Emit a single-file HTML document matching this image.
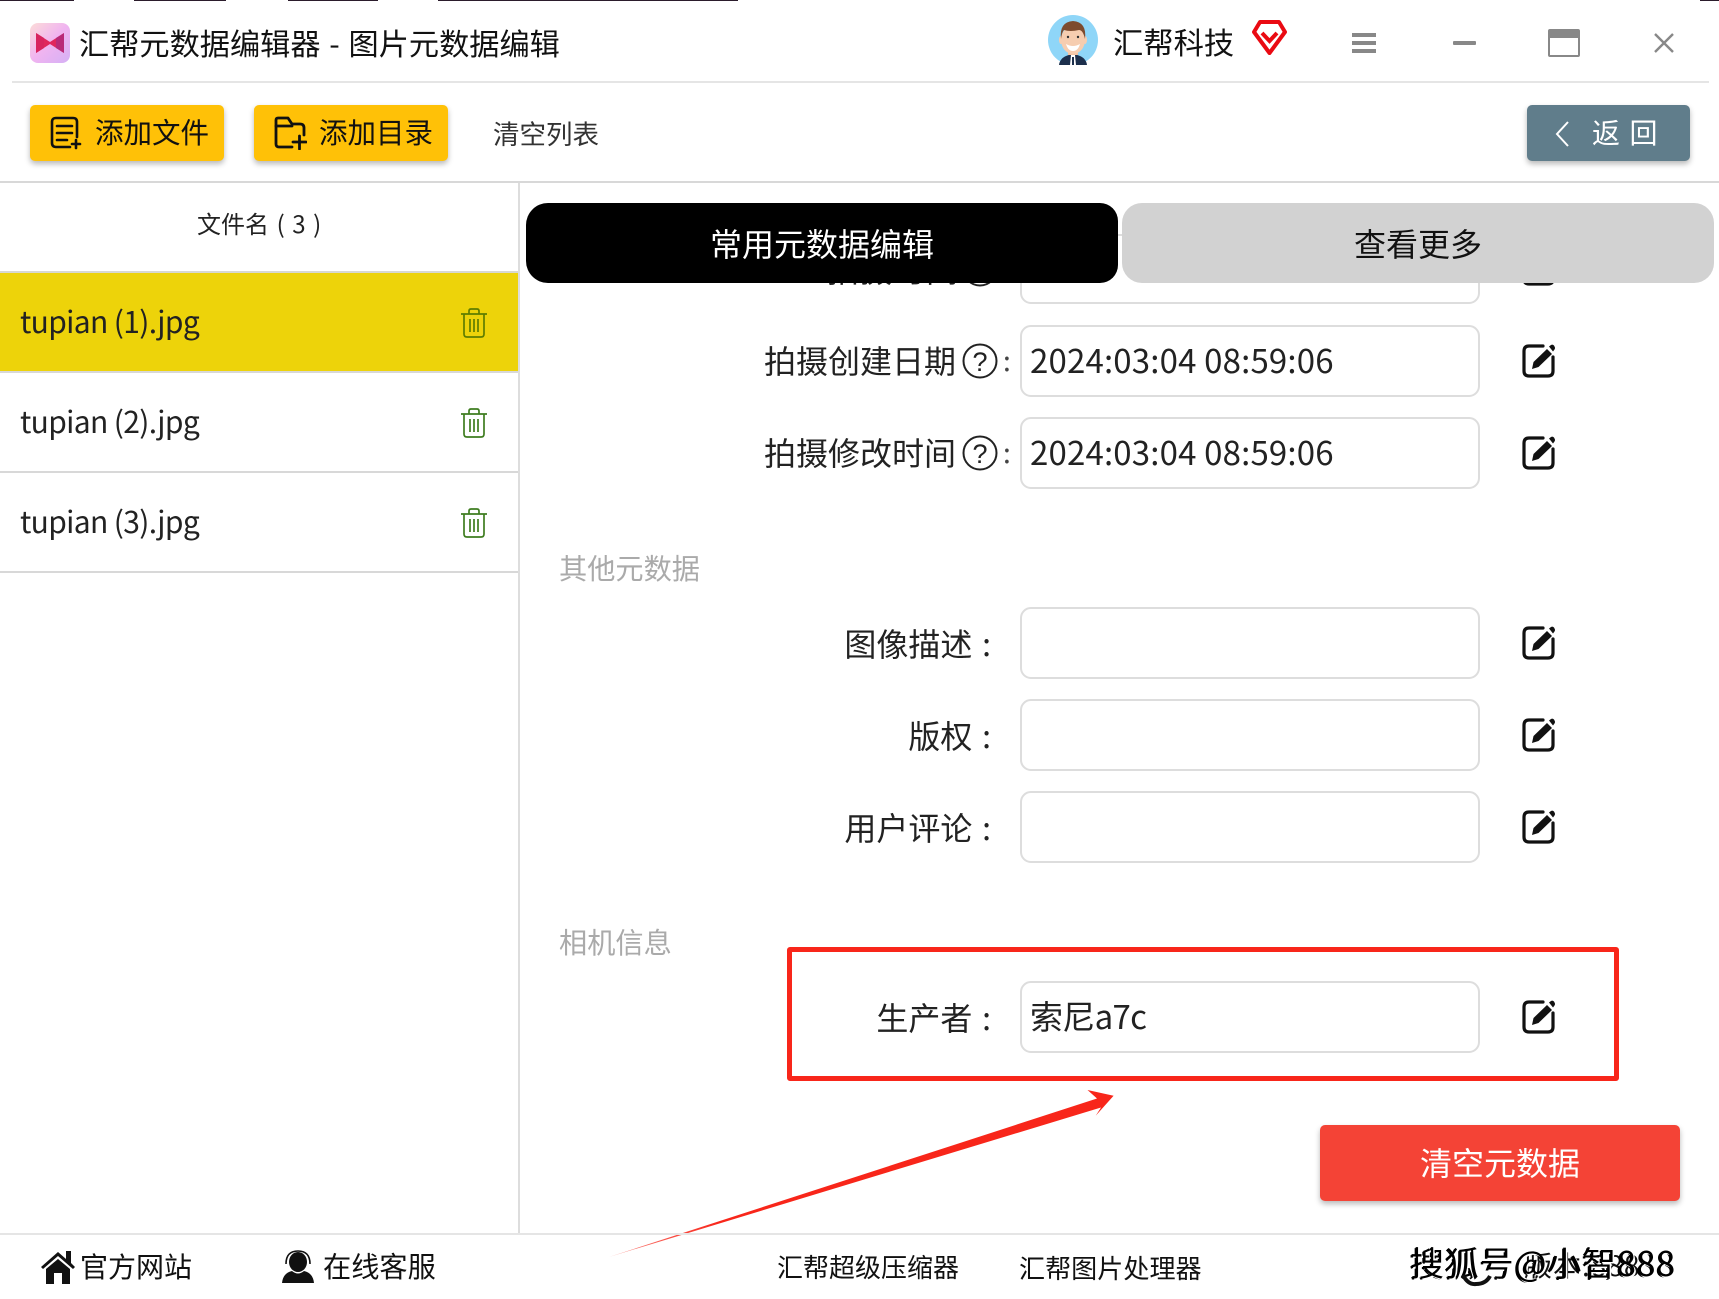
<!DOCTYPE html>
<html lang="zh-CN"><head><meta charset="utf-8"><title>汇帮元数据编辑器</title>
<style>
html,body{margin:0;padding:0;background:#fff}
#p{position:relative;width:1719px;height:1299px;overflow:hidden;background:#fff;font-family:"Liberation Sans","Noto Sans CJK SC",sans-serif;color:#111}
#p *{box-sizing:border-box}
.a{position:absolute}
.t{position:absolute;white-space:nowrap;line-height:1}
.n{font-family:"Noto Sans CJK SC",sans-serif}
.btn{position:absolute;border-radius:5px;box-shadow:0 3px 6px rgba(0,0,0,.28)}
.inp{position:absolute;left:1020px;width:460px;border:2px solid #ddd;border-radius:11px;background:#fff}
.lab{position:absolute;right:728px;font-size:32px;line-height:1;white-space:nowrap;color:#222;font-family:"Noto Sans CJK SC",sans-serif;font-weight:400;word-spacing:2.500px}
.val{position:absolute;left:1030px;font-size:33px;line-height:1;white-space:nowrap;color:#222;font-family:"Noto Sans CJK SC",sans-serif;font-weight:400;letter-spacing:.17px}
.row{position:absolute;left:0;width:518px;height:100px;border-bottom:2px solid #d8d8d8}
.row span{position:absolute;left:20px;top:29px;font-size:30px;line-height:1.2;color:#222;font-family:"Noto Sans CJK SC",sans-serif;font-weight:400;letter-spacing:-.65px}
</style></head><body><div id="p">

<svg class="a" style="left:0;top:0" width="1719" height="2"><g fill="#2b1c2c"><rect width="74" height="1"/><rect x="134" width="92" height="1"/><rect x="288" width="90" height="1"/><rect x="438" width="300" height="1"/><rect x="1700" width="19" height="1"/></g></svg>

<!-- header -->
<svg class="a" style="left:30px;top:23px" width="40" height="40" viewBox="0 0 40 40"><defs><linearGradient id="lg" x1="0" y1="0" x2="1" y2="1"><stop offset="0" stop-color="#fcdcd8"/><stop offset=".5" stop-color="#f0b4f0"/><stop offset="1" stop-color="#d5b0f5"/></linearGradient></defs><rect width="40" height="40" rx="8" fill="url(#lg)"/><path d="M6 10 L20 19 L34 10 V30 L20 21 L6 30Z" fill="#e0265c"/><path d="M6 10 L14 15 V25 L6 30Z" fill="#d8245e"/><path d="M34 10 L26 15 V25 L34 30Z" fill="#b82a78"/></svg>
<div class="t n" style="left:79px;top:25px;font-size:30.200px;font-weight:400;line-height:34px;color:#111;word-spacing:2px">汇帮元数据编辑器 - 图片元数据编辑</div>
<svg class="a" style="left:1048px;top:15px" width="50" height="50" viewBox="0 0 50 50"><circle cx="25" cy="25" r="25" fill="#8fd6f8"/><path d="M11 50 Q12 41 25 39 Q38 41 39 50Z" fill="#1c2f4c"/><path d="M23 40h4l1 10h-6z" fill="#fff"/><rect x="24" y="42" width="2" height="8" fill="#1c2f4c"/><rect x="20" y="30" width="10" height="10" fill="#f3c3a3"/><ellipse cx="25" cy="25" rx="12" ry="14" fill="#f6cdb0"/><ellipse cx="13" cy="25" rx="2" ry="4" fill="#f6cdb0"/><ellipse cx="37" cy="25" rx="2" ry="4" fill="#f6cdb0"/><path d="M13 24 Q11 7 25 6 Q39 7 37 24 Q35 15 31 15 Q22 17 16 15 Q14 17 13 24Z" fill="#7d4b2e"/><path d="M18 29 Q25 33 32 29 Q30 36 25 36 Q20 36 18 29Z" fill="#fff"/><circle cx="20" cy="22" r="1.2" fill="#333"/><circle cx="30" cy="22" r="1.2" fill="#333"/></svg>
<div class="t n" style="left:1113px;top:24px;font-size:30.300px;font-weight:400;line-height:34px;color:#111">汇帮科技</div>
<svg class="a" style="left:1252px;top:20px" width="35" height="35" viewBox="0 0 35 35"><path d="M8 2H27L33 12 17.5 33 2 12Z" fill="none" stroke="#ea0a12" stroke-width="4" stroke-linejoin="round"/><path d="M10 13 L17.5 21 L25 13" fill="none" stroke="#ea0a12" stroke-width="4"/></svg>
<div class="a" style="left:1352px;top:33px;width:24px;height:4px;background:#888"></div>
<div class="a" style="left:1352px;top:41px;width:24px;height:4px;background:#888"></div>
<div class="a" style="left:1352px;top:49px;width:24px;height:4px;background:#888"></div>
<div class="a" style="left:1453px;top:41px;width:23px;height:4px;background:#888;border-radius:1px"></div>
<div class="a" style="left:1548px;top:29px;width:32px;height:28px;border:2px solid #888;border-top:9px solid #888;border-radius:2px"></div>
<svg class="a" style="left:1654px;top:33px" width="20" height="20"><path d="M1 1L19 19M19 1L1 19" stroke="#888" stroke-width="2.4"/></svg>
<div class="a" style="left:12px;top:81px;width:1697px;height:2px;background:#e5e5e5"></div>

<!-- toolbar -->
<div class="btn" style="left:30px;top:105px;width:194px;height:56px;background:#ffc107"></div>
<svg class="a" style="left:49px;top:116px" width="34" height="34" viewBox="0 0 34 34" fill="none" stroke="#111" stroke-width="2.6" stroke-linecap="round"><path d="M21 31H7Q3 31 3 27V6Q3 2 7 2H24Q28 2 28 6V21"/><path d="M8 10H23M8 17H23M8 24H18"/><path d="M23 28H31M27 24V32"/></svg>
<div class="t n" style="left:95px;top:115px;font-size:28.500px;line-height:34px;font-weight:400;color:#111">添加文件</div>
<div class="btn" style="left:254px;top:105px;width:194px;height:56px;background:#ffc107"></div>
<svg class="a" style="left:273px;top:116px" width="34" height="34" viewBox="0 0 34 34" fill="none" stroke="#111" stroke-width="2.8" stroke-linecap="round" stroke-linejoin="round"><path d="M19 31H6Q3 31 3 28V4Q3 2 5 2H15L19 8H27Q31 8 31 12V19"/><path d="M3 10H19"/><path d="M20 26H33M26.500 20V33"/></svg>
<div class="t n" style="left:319px;top:115px;font-size:28.500px;line-height:34px;font-weight:400;color:#111">添加目录</div>
<div class="t n" style="left:493px;top:117px;font-size:26.500px;line-height:32px;font-weight:400;color:#333">清空列表</div>
<div class="btn" style="left:1527px;top:105px;width:163px;height:56px;background:#607d8b"></div>
<svg class="a" style="left:1552px;top:120px" width="20" height="28"><path d="M16 2L5 14L16 26" fill="none" stroke="#fff" stroke-width="2"/></svg>
<div class="t n" style="left:1592px;top:115px;font-size:28px;line-height:34px;font-weight:400;color:#fff;letter-spacing:9.500px">返回</div>
<div class="a" style="left:0;top:181px;width:1719px;height:2px;background:#d8d8d8"></div>

<!-- left list -->
<div class="a" style="left:518px;top:183px;width:2px;height:1051px;background:#ddd"></div>
<div class="t n" style="left:197px;top:206px;font-size:24px;line-height:34px;font-weight:400;color:#222;white-space:pre;word-spacing:2.200px">文件名 ( 3 )</div>
<div class="a" style="left:0;top:271px;width:518px;height:2px;background:#d8d8d0"></div>
<div class="row" style="top:273px;background:#edd30a"><span>tupian (1).jpg</span></div>
<div class="row" style="top:373px"><span>tupian (2).jpg</span></div>
<div class="row" style="top:473px"><span>tupian (3).jpg</span></div>
<svg class="a" style="left:460px;top:307px" width="28" height="32" viewBox="0 0 28 32" fill="none" stroke="#5f7d00" stroke-width="1.7"><path d="M1 7H27M9 7V4Q9 2 11 2H17Q19 2 19 4V7M4 7V27Q4 30 7 30H21Q24 30 24 27V7M10 12V25M14 12V25M18 12V25"/></svg>
<svg class="a" style="left:460px;top:407px" width="28" height="32" viewBox="0 0 28 32" fill="none" stroke="#3f7d20" stroke-width="1.7"><path d="M1 7H27M9 7V4Q9 2 11 2H17Q19 2 19 4V7M4 7V27Q4 30 7 30H21Q24 30 24 27V7M10 12V25M14 12V25M18 12V25"/></svg>
<svg class="a" style="left:460px;top:507px" width="28" height="32" viewBox="0 0 28 32" fill="none" stroke="#3f7d20" stroke-width="1.7"><path d="M1 7H27M9 7V4Q9 2 11 2H17Q19 2 19 4V7M4 7V27Q4 30 7 30H21Q24 30 24 27V7M10 12V25M14 12V25M18 12V25"/></svg>

<!-- clipped row under tabs -->
<div class="inp" style="top:234px;height:70px"></div>
<svg class="a" style="left:1522px;top:252px" width="34" height="34"><use href="#ed"/></svg>
<div class="t n" style="left:827px;top:250px;font-size:32px;line-height:38px;font-weight:400;color:#222;letter-spacing:1px">拍摄时间</div>
<svg class="a" style="left:962px;top:251px" width="36" height="36"><circle cx="18" cy="18" r="16.500" fill="none" stroke="#222" stroke-width="2"/></svg>

<!-- tabs -->
<div class="a" style="left:526px;top:203px;width:592px;height:80px;background:#000;border-radius:22px 18px 18px 22px"></div>
<div class="t n" style="left:526px;width:592px;text-align:center;top:223px;font-size:32px;line-height:40px;font-weight:400;color:#fff">常用元数据编辑</div>
<div class="a" style="left:1122px;top:203px;width:592px;height:80px;background:#d2d2d2;border-radius:20px"></div>
<div class="t n" style="left:1122px;width:592px;text-align:center;top:223px;font-size:32px;line-height:40px;font-weight:400;color:#111">查看更多</div>

<!-- rows -->
<div class="lab" style="right:763px;top:341px;line-height:38px">拍摄创建日期</div>
<svg class="a" style="left:962px;top:343px" width="36" height="36"><circle cx="18" cy="18" r="16.500" fill="none" stroke="#222" stroke-width="2"/><text x="18" y="28" text-anchor="middle" font-size="27" font-family="Liberation Sans" fill="#222">?</text></svg>
<div class="t n" style="left:1003px;top:344px;font-size:28px;line-height:32px;color:#444">:</div>
<div class="inp" style="top:325px;height:72px"></div>
<div class="val" style="top:340px;line-height:38px">2024:03:04 08:59:06</div>

<div class="lab" style="right:763px;top:433px;line-height:38px">拍摄修改时间</div>
<svg class="a" style="left:962px;top:435px" width="36" height="36"><circle cx="18" cy="18" r="16.500" fill="none" stroke="#222" stroke-width="2"/><text x="18" y="28" text-anchor="middle" font-size="27" font-family="Liberation Sans" fill="#222">?</text></svg>
<div class="t n" style="left:1003px;top:436px;font-size:28px;line-height:32px;color:#444">:</div>
<div class="inp" style="top:417px;height:72px"></div>
<div class="val" style="top:432px;line-height:38px">2024:03:04 08:59:06</div>

<div class="t n" style="left:559px;top:550px;font-size:28.200px;line-height:36px;font-weight:400;color:#aaa">其他元数据</div>

<div class="lab" style="top:624px;line-height:38px">图像描述 :</div>
<div class="inp" style="top:607px;height:72px"></div>
<div class="lab" style="top:716px;line-height:38px">版权 :</div>
<div class="inp" style="top:699px;height:72px"></div>
<div class="lab" style="top:808px;line-height:38px">用户评论 :</div>
<div class="inp" style="top:791px;height:72px"></div>

<div class="t n" style="left:559px;top:924px;font-size:28.200px;line-height:36px;font-weight:400;color:#aaa">相机信息</div>

<div class="lab" style="top:998px;line-height:38px">生产者 :</div>
<div class="inp" style="top:981px;height:72px"></div>
<div class="val" style="top:996px;line-height:38px;letter-spacing:-.7px">索尼a7c</div>

<!-- edit icons -->
<svg width="0" height="0" style="position:absolute"><defs><g id="ed"><path d="M21 2H7Q2 2 2 7V27Q2 32 7 32H26Q31 32 31 27V13" fill="none" stroke="#111" stroke-width="3.200" stroke-linecap="round"/><path d="M10 25L11.500 18 25 5 30 10 16.500 23Z" fill="#111"/><path d="M27 2.500L29 1Q30.500 0 32 1.500L32.500 2.500Q33.500 4 32.500 5.500L31 7.500Z" fill="#111"/></g></defs></svg>
<svg class="a" style="left:1522px;top:344px" width="34" height="34"><use href="#ed"/></svg>
<svg class="a" style="left:1522px;top:436px" width="34" height="34"><use href="#ed"/></svg>
<svg class="a" style="left:1522px;top:626px" width="34" height="34"><use href="#ed"/></svg>
<svg class="a" style="left:1522px;top:718px" width="34" height="34"><use href="#ed"/></svg>
<svg class="a" style="left:1522px;top:810px" width="34" height="34"><use href="#ed"/></svg>
<svg class="a" style="left:1522px;top:1000px" width="34" height="34"><use href="#ed"/></svg>

<!-- annotation -->
<div class="a" style="left:787px;top:947px;width:832px;height:134px;border:5.500px solid #f8261a;border-radius:3px"></div>
<svg class="a" style="left:0;top:0" width="1719" height="1299"><defs><linearGradient id="ar" gradientUnits="userSpaceOnUse" x1="609" y1="1257" x2="720" y2="1222"><stop offset="0" stop-color="#f8261a" stop-opacity=".55"/><stop offset="1" stop-color="#f8261a"/></linearGradient></defs><path d="M609 1257L1097 1098.500 1087.500 1090 1113.600 1095.700 1095.700 1115.700 1101 1107.500Z" fill="url(#ar)"/></svg>

<div class="btn" style="left:1320px;top:1125px;width:360px;height:76px;background:#f44336"></div>
<div class="t n" style="left:1320px;width:360px;text-align:center;top:1142px;font-size:32px;line-height:40px;font-weight:400;color:#fff">清空元数据</div>

<!-- footer -->
<div class="a" style="left:0;top:1233px;width:1719px;height:2px;background:#e5e5e5"></div>
<svg class="a" style="left:40px;top:1249px" width="36" height="36" viewBox="0 0 36 36"><path d="M1 18L18 3 26 10V2H31V14L35 18 33 20 18 7 3 20Z" fill="#111"/><path d="M6 20L18 10 30 20V35H22V24H14V35H6Z" fill="#111"/></svg>
<div class="t n" style="left:80px;top:1248px;font-size:28px;line-height:36px;font-weight:400;color:#111">官方网站</div>
<svg class="a" style="left:281px;top:1250px" width="34" height="34" viewBox="0 0 34 34"><ellipse cx="17" cy="12" rx="9" ry="10" fill="#111"/><path d="M5 14Q5 1 17 1 29 1 29 14" fill="none" stroke="#111" stroke-width="1.600"/><path d="M1 33Q2 23 11 21 17 26 23 21 32 23 33 33Z" fill="#111"/></svg>
<div class="t n" style="left:323px;top:1248px;font-size:28.200px;line-height:36px;font-weight:400;color:#111">在线客服</div>
<div class="t n" style="left:777px;top:1250px;font-size:26px;line-height:34px;font-weight:400;color:#111">汇帮超级压缩器</div>
<div class="t n" style="left:1019px;top:1250px;font-size:26.100px;line-height:34px;font-weight:400;color:#111">汇帮图片处理器</div>
<div class="t n" style="left:1524px;top:1247px;font-size:28px;line-height:36px;font-weight:400;color:#111;white-space:nowrap;letter-spacing:1px">版本:888</div>
<div class="t n" style="left:1410px;top:1244px;font-size:34px;line-height:36px;font-weight:400;color:#000;text-shadow:1.500px 1.500px 0 #fff,-1px 1px 0 #000;white-space:nowrap;letter-spacing:.8px">搜狐号@小智888</div>
<svg class="a" style="left:1460px;top:1272px" width="36" height="16"><path d="M3 3Q8 13 16 12 26 12 30 4" fill="none" stroke="#111" stroke-width="4"/></svg>
</div></body></html>
